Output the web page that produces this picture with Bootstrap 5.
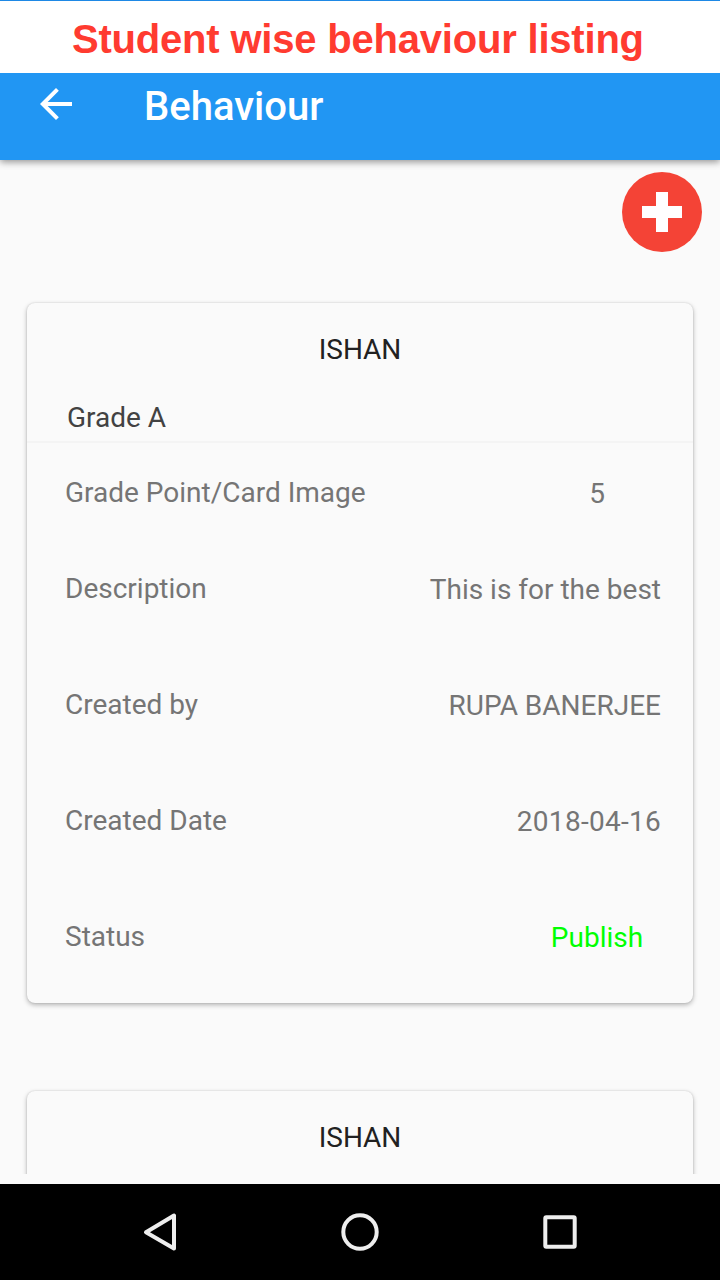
<!DOCTYPE html>
<html lang="en">
<head>
<meta charset="utf-8">
<meta name="viewport" content="width=device-width, initial-scale=1">
<title>Behaviour</title>
<link href="https://cdn.jsdelivr.net/npm/bootstrap@5.3.0/dist/css/bootstrap.min.css" rel="stylesheet">
<style>
  body { background: #fafafa; font-family: Roboto, sans-serif; font-size: 28px; line-height: 33px; color: #757575; }
  .screen { height: 1280px; }
  .caption-bar { height: 73px; border-top: 1px solid #1e88e5; background: #fff; z-index: 2; }
  .caption-text { font: bold 40px/46px "Liberation Sans", sans-serif; color: #ff3b30; white-space: nowrap; padding: 15px 0 0 72px; letter-spacing: -.2px; }
  .app-bar { height: 87px; background: #2196f3; box-shadow: 0 2px 7px rgba(0,0,0,.42); padding: 7px 32px 0; z-index: 1; }
  .app-title { font-size: 40px; line-height: 47px; font-weight: 500; margin: 3px 0 0 64px; color: #fff; }
  .add-row { padding: 12px 18px 0; height: 143px; }
  .add-btn { width: 80px; height: 80px; background: #f44336; }
  .feed { height: 1014px; }
  .record { --bs-card-border-width: 0; --bs-card-bg: #fafafa; --bs-card-border-radius: 8px; color: inherit;
    margin: 0 27px 88px; height: 700px; flex: none; box-shadow: 0 2px 5px rgba(0,0,0,.28), 0 0 2px rgba(0,0,0,.14); }
  .student { color: #212121; padding-top: 30px; }
  .grade { color: #424242; padding: 35px 40px 7px; border-bottom: 2px solid #f4f4f4; }
  .fields { padding: 33px 32px 0 38px; }
  .field { height: 116px; }
  .field:first-child { height: 96px; }
  .value { padding-top: 1px; }
  .value-mid { width: 128px; text-align: center; }
  .value-date { letter-spacing: .28px; }
  .publish { color: #0f0; }
  .nav-keys { height: 96px; background: #000; padding: 0 136px; }
</style>
</head>
<body>
<div class="screen d-flex flex-column overflow-hidden">
  <div class="caption-bar flex-shrink-0 position-relative"><div class="caption-text">Student wise behaviour listing</div></div>
  <header class="app-bar d-flex align-items-start flex-shrink-0 position-relative">
    <svg width="48" height="48" viewBox="0 0 24 24" fill="#fff"><path d="M20 11H7.83l5.59-5.59L12 4l-8 8 8 8 1.41-1.41L7.83 13H20v-2z"/></svg>
    <h1 class="app-title">Behaviour</h1>
  </header>
  <main class="feed d-flex flex-column overflow-hidden flex-shrink-0">
    <div class="add-row d-flex justify-content-end flex-shrink-0">
      <button class="add-btn btn rounded-circle border-0 p-0 d-flex align-items-center justify-content-center" aria-label="Add">
        <svg width="40" height="40" viewBox="0 0 40 40" fill="#fff"><path d="M14 0h12v14h14v12H26v14H14V26H0V14h14z"/></svg>
      </button>
    </div>
    <article class="card record">
      <div class="student text-center">ISHAN</div>
      <div class="grade">Grade A</div>
      <div class="fields">
        <div class="field d-flex justify-content-between"><span>Grade Point/Card Image</span><span class="value value-mid">5</span></div>
        <div class="field d-flex justify-content-between"><span>Description</span><span class="value">This is for the best</span></div>
        <div class="field d-flex justify-content-between"><span>Created by</span><span class="value">RUPA BANERJEE</span></div>
        <div class="field d-flex justify-content-between"><span>Created Date</span><span class="value value-date">2018-04-16</span></div>
        <div class="field d-flex justify-content-between"><span>Status</span><span class="value value-mid publish">Publish</span></div>
      </div>
    </article>
    <article class="card record">
      <div class="student text-center">ISHAN</div>
    </article>
  </main>
  <nav class="nav-keys d-flex align-items-center justify-content-between flex-shrink-0 mt-auto">
    <svg width="48" height="48" viewBox="0 0 48 48" fill="none" stroke="#eee" stroke-width="4" stroke-linejoin="round"><path d="M38 7.500v33L10 24.300z"/></svg>
    <svg width="48" height="48" viewBox="0 0 48 48" fill="none" stroke="#eee" stroke-width="4"><circle cx="24" cy="24" r="16.700"/></svg>
    <svg width="48" height="48" viewBox="0 0 48 48" fill="none" stroke="#eee" stroke-width="4"><rect x="9.300" y="9.300" width="29.400" height="29.400" rx="1"/></svg>
  </nav>
</div>
<script src="https://cdn.jsdelivr.net/npm/bootstrap@5.3.0/dist/js/bootstrap.bundle.min.js"></script>
</body>
</html>
